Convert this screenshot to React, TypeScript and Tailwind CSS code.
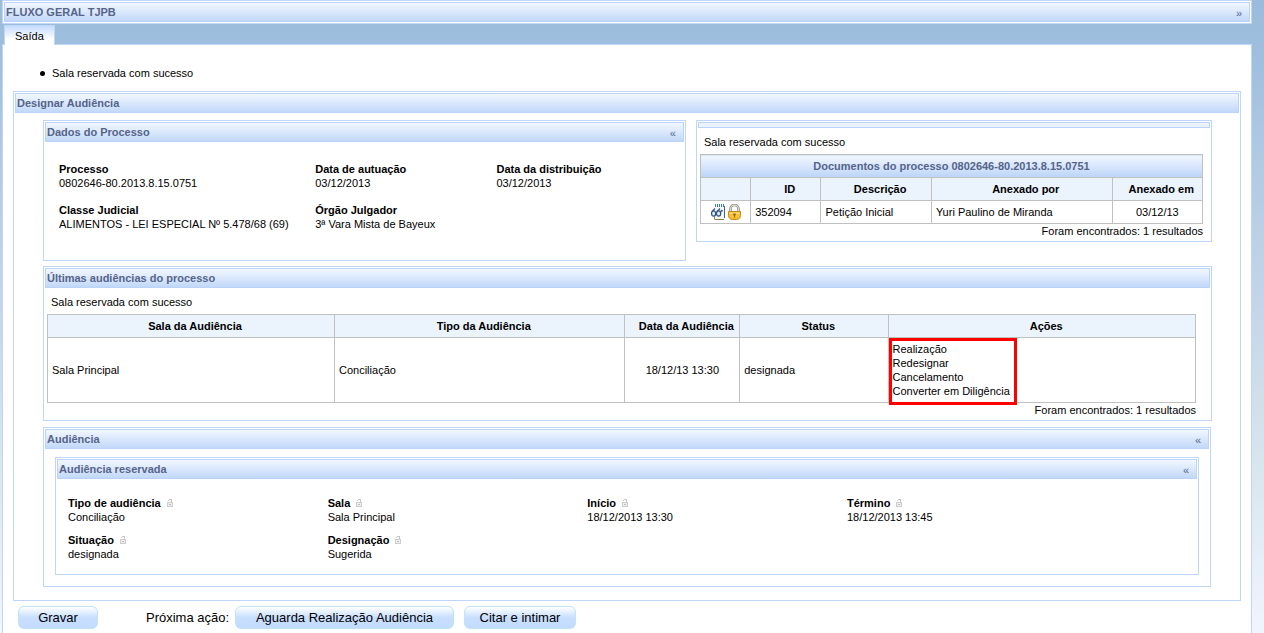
import React from 'react';

interface PanelProps {
  title?: string;
  toggle?: string;
  className?: string;
  bodyClass?: string;
  children?: React.ReactNode;
}

const Panel: React.FC<PanelProps> = ({ title, toggle, className = '', bodyClass = '', children }) => (
  <section className={`border border-[#bed6f8] bg-white p-px ${className}`}>
    <div
      className={`flex items-center justify-between border border-[#bad3f8] pl-px pr-[7px] text-[#55648a] ${
        title ? 'bg-gradient-to-b from-[#f2f7ff] to-[#c2d8f9]' : 'bg-[#ebf3fe]'
      }`}
    >
      {title ? <h2 className="py-0.5 font-bold">{title}</h2> : <span className="h-1" />}
      {toggle && (
        <button type="button" aria-label={`Alternar ${title}`} className="pt-px leading-[14px]">
          {toggle}
        </button>
      )}
    </div>
    {children && <div className={bodyClass}>{children}</div>}
  </section>
);

const SmallLock = () => (
  <svg width="6" height="8" viewBox="0 0 6 8" shapeRendering="crispEdges" className="ml-1.5">
    <path d="M2 0h3v1H2zM1 1h1v1H1zM4 1h1v3H4z" fill="#c6c6c6" />
    <path d="M0 3h6v5H0z" fill="#cdcdcd" />
    <path d="M1 4h4v3H1z" fill="#efefef" />
    <path d="M2 5h2v1H2z" fill="#bdbdbd" />
  </svg>
);

const NotepadIcon = () => (
  <svg width="15" height="16" viewBox="0 0 15 16" fill="none">
    <path d="M3.5 2h10.500v12l-1 1H3.500z" fill="#f4f8fc" />
    <path d="M13.500 2v12" stroke="#4d6478" />
    <path d="M3.500 12.500v2.500M3.500 15.500h9.500" stroke="#8a7f45" />
    <path d="M4.500 0v3M6.500 0v3M8.500 0v3M10.500 0v3M12.500 0v3" stroke="#3f78b5" />
    <ellipse cx="2.600" cy="9.500" rx="2.100" ry="2.600" fill="#dcebf8" stroke="#33557d" strokeWidth="1.200" />
    <ellipse cx="7.600" cy="9.500" rx="2.100" ry="2.600" fill="#dcebf8" stroke="#33557d" strokeWidth="1.200" />
    <path d="M1 7.500 4 4.500M6 7.500l3-3M9.500 8.500l1-2 1.500.500" stroke="#33557d" strokeWidth="1.200" />
  </svg>
);

const PadlockIcon = () => (
  <svg width="13" height="16" viewBox="0 0 13 16" fill="none">
    <path d="M2.500 8V5a4 4 0 0 1 8 0v3" stroke="#8d8d84" strokeWidth="2.600" />
    <path d="M2.600 8V5a3.900 3.900 0 0 1 7.800 0v3" stroke="#deded5" strokeWidth="1.100" />
    <path d="M.5 7.500h12v4c0 2.500-2 4-4 4h-4c-2 0-4-1.500-4-4z" fill="#f6bc2a" stroke="#c18a1a" />
    <path d="M1.500 8.500h10v1.500h-10z" fill="#ffe27a" />
    <path d="M2 12h9" stroke="#ffcf4a" />
    <circle cx="6.500" cy="10.500" r="1.300" fill="#9b6710" />
    <path d="M6.500 11v2.500" stroke="#9b6710" strokeWidth="1.200" />
  </svg>
);

interface FieldProps {
  label: string;
  value: string;
  locked?: boolean;
}

const Field: React.FC<FieldProps> = ({ label, value, locked }) => (
  <div>
    <dt className="flex items-center font-bold">
      {label}
      {locked && <SmallLock />}
    </dt>
    <dd>{value}</dd>
  </div>
);

const cell = 'border border-[#c0c0c0] px-1 py-1';
const headCell = 'border border-[#c0c0c0] bg-[#ebf3fd] py-1 pr-1 pl-3 font-bold';
const button =
  'h-[23px] rounded-md border border-[#bfe3f2] bg-gradient-to-b from-white via-[#c8dfff] via-50% to-[#c3dbff] text-[13px] leading-4';

const actions = ['Realização', 'Redesignar', 'Cancelamento', 'Converter em Diligência'];

export default function App() {
  return (
    <div className="flex min-h-screen flex-col bg-[linear-gradient(#9bbbdc_0%,#a0c0df_11%,#b0cae3_25%,#c3d6e8_48%,#d5e4ec_70%,#ebf1fa_94%,#f2f5fc_100%)] pl-0.5 pr-3 font-['Liberation_Sans',Arial,sans-serif] text-[11px] leading-[14px] text-black">
      <Panel title="FLUXO GERAL TJPB" toggle="»" />

      <div className="mt-px flex pl-0.5" role="tablist">
        <button
          type="button"
          role="tab"
          aria-selected="true"
          className="relative -mb-px border border-b-0 border-[#bed6f8] bg-gradient-to-b from-[#c6dcff] to-white to-70% px-2.5 pb-0.5 pt-[3px] leading-[14px]"
        >
          Saída
        </button>
      </div>

      <main className="flex-1 border border-b-0 border-[#bed6f8] bg-white px-2.5 pt-[21px]">
        <ul className="pl-[27px]">
          <li className="flex items-center gap-[7px]">
            <span className="size-[5px] rounded-full bg-black" />
            Sala reservada com sucesso
          </li>
        </ul>

        <Panel title="Designar Audiência" className="mt-[11px]" bodyClass="pt-[7px] pb-3 pl-7 pr-[27px]">
          <div className="flex items-start gap-2.5">
            <Panel
              title="Dados do Processo"
              toggle="«"
              className="w-[55%]"
              bodyClass="pt-5 pb-7 pl-3.5"
            >
              <dl className="grid grid-cols-[41%_29%_1fr] gap-y-[13px]">
                <Field label="Processo" value="0802646-80.2013.8.15.0751" />
                <Field label="Data de autuação" value="03/12/2013" />
                <Field label="Data da distribuição" value="03/12/2013" />
                <Field label="Classe Judicial" value="ALIMENTOS - LEI ESPECIAL Nº 5.478/68 (69)" />
                <Field label="Órgão Julgador" value="3ª Vara Mista de Bayeux" />
              </dl>
            </Panel>

            <Panel className="flex-1" bodyClass="pt-[7px] pb-0.5 pl-0.5 pr-[7px]">
              <p className="mb-[5px] pl-1">Sala reservada com sucesso</p>
              <table className="w-full table-fixed border-collapse">
                <colgroup>
                  <col className="w-[10%]" />
                  <col className="w-[14%]" />
                  <col className="w-[22%]" />
                  <col className="w-[36%]" />
                  <col className="w-[18%]" />
                </colgroup>
                <thead>
                  <tr>
                    <th
                      colSpan={5}
                      className="border border-[#c0c0c0] bg-gradient-to-b from-[#f2f7ff] to-[#bcd4f8] py-1 font-bold text-[#55648a]"
                    >
                      Documentos do processo 0802646-80.2013.8.15.0751
                    </th>
                  </tr>
                  <tr>
                    <td className={headCell} />
                    <th className={headCell}>ID</th>
                    <th className={headCell}>Descrição</th>
                    <th className={headCell}>Anexado por</th>
                    <th className={`${headCell} whitespace-nowrap`}>Anexado em</th>
                  </tr>
                </thead>
                <tbody>
                  <tr>
                    <td className="border border-[#c0c0c0] px-1 py-[3px]">
                      <div className="flex items-center justify-center gap-0.5">
                        <NotepadIcon />
                        <PadlockIcon />
                      </div>
                    </td>
                    <td className={cell}>352094</td>
                    <td className={cell}>Petição Inicial</td>
                    <td className={cell}>Yuri Paulino de Miranda</td>
                    <td className={`${cell} text-center`}>03/12/13</td>
                  </tr>
                </tbody>
              </table>
              <p className="text-right">Foram encontrados: 1 resultados</p>
            </Panel>
          </div>

          <Panel
            title="Últimas audiências do processo"
            className="mt-[5px]"
            bodyClass="pt-[7px] pb-0.5 pl-0.5 pr-3.5"
          >
            <p className="mb-[5px] pl-1">Sala reservada com sucesso</p>
            <table className="w-full table-fixed border-collapse">
              <colgroup>
                <col className="w-[25%]" />
                <col className="w-[25.3%]" />
                <col className="w-[10%]" />
                <col className="w-[13%]" />
                <col className="w-[26.7%]" />
              </colgroup>
              <thead>
                <tr>
                  <th className={headCell}>Sala da Audiência</th>
                  <th className={headCell}>Tipo da Audiência</th>
                  <th className={`${headCell} whitespace-nowrap`}>Data da Audiência</th>
                  <th className={headCell}>Status</th>
                  <th className={headCell}>Ações</th>
                </tr>
              </thead>
              <tbody>
                <tr>
                  <td className={cell}>Sala Principal</td>
                  <td className={cell}>Conciliação</td>
                  <td className={`${cell} text-center`}>18/12/13 13:30</td>
                  <td className={cell}>designada</td>
                  <td className="border border-[#c0c0c0] p-0">
                    <ul className="relative -mb-[3px] w-32 border-[3px] border-[#ff0000] pb-1 pt-px">
                      {actions.map(action => (
                        <li key={action}>
                          <a href="#" className="block whitespace-nowrap">{action}</a>
                        </li>
                      ))}
                    </ul>
                  </td>
                </tr>
              </tbody>
            </table>
            <p className="text-right">Foram encontrados: 1 resultados</p>
          </Panel>

          <Panel title="Audiência" toggle="«" className="mr-px mt-1.5" bodyClass="px-2.5 pb-2.5 pt-2">
            <Panel title="Audiência reservada" toggle="«" bodyClass="pt-[17px] pb-3 pl-[11px]">
              <dl className="grid grid-cols-[23%_23%_23%_1fr] gap-y-[9px]">
                <Field label="Tipo de audiência" value="Conciliação" locked />
                <Field label="Sala" value="Sala Principal" locked />
                <Field label="Início" value="18/12/2013 13:30" locked />
                <Field label="Término" value="18/12/2013 13:45" locked />
                <Field label="Situação" value="designada" locked />
                <Field label="Designação" value="Sugerida" locked />
              </dl>
            </Panel>
          </Panel>
        </Panel>

        <div className="mt-[5px] flex items-center gap-2.5 pl-[5px]">
          <button type="button" className={`${button} min-w-20`}>Gravar</button>
          <span className="ml-[38px] w-[79px] whitespace-nowrap text-[13px]">Próxima ação:</span>
          <button type="button" className={`${button} min-w-[219px]`}>Aguarda Realização Audiência</button>
          <button type="button" className={`${button} min-w-28`}>Citar e intimar</button>
        </div>
      </main>
    </div>
  );
}
